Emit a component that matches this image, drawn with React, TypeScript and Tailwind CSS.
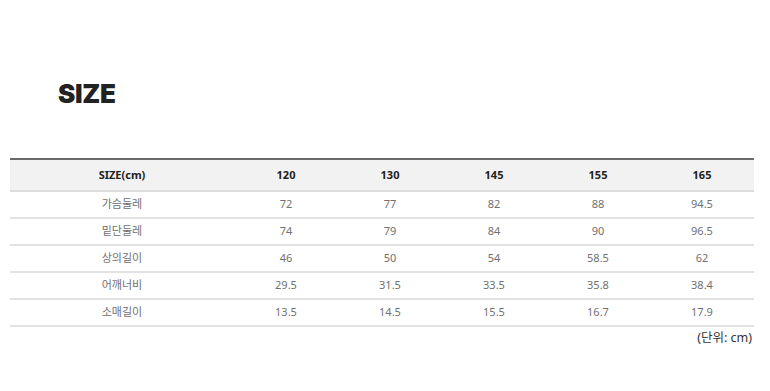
import React from "react";

const rows: [string, string[]][] = [
  ["가슴둘레", ["72", "77", "82", "88", "94.5"]],
  ["밑단둘레", ["74", "79", "84", "90", "96.5"]],
  ["상의길이", ["46", "50", "54", "58.5", "62"]],
  ["어깨너비", ["29.5", "31.5", "33.5", "35.8", "38.4"]],
  ["소매길이", ["13.5", "14.5", "15.5", "16.7", "17.9"]],
];

const font = { fontFamily: '"Noto Sans", "Noto Sans CJK KR", sans-serif' };

export default function App() {
  return (
    <div className="w-[770px] h-[391px] bg-white" style={font}>
      <div className="pt-[79px] pl-[58px] h-[158px]">
        <h1 className="text-[26px] leading-[30px] font-black tracking-[-0.3px] text-[#222]" style={{ fontFamily: 'Inter, sans-serif' }}>
          SIZE
        </h1>
      </div>
      <div className="mx-[10px] w-[744px]">
        <div className="grid grid-cols-[224px_104px_104px_104px_104px_104px] h-[34px] border-t-2 border-[#6b6b6b] bg-[#f3f2f2] border-b-2 border-b-[#dcdcdc] items-center text-[11px] font-bold text-[#222]">
          <div className="text-center">SIZE(cm)</div>
          <div className="text-center">120</div>
          <div className="text-center">130</div>
          <div className="text-center">145</div>
          <div className="text-center">155</div>
          <div className="text-center">165</div>
        </div>
        {rows.map(([label, vals]) => (
          <div
            key={label}
            className="grid grid-cols-[224px_104px_104px_104px_104px_104px] h-[27px] border-b-2 border-[#e2e2e2] items-center text-[11px] text-[#707070]"
          >
            <div className="text-center">{label}</div>
            {vals.map((v, i) => (
              <div key={i} className="text-center">{v}</div>
            ))}
          </div>
        ))}
        <div className="text-right pr-[2px] pt-[2px] text-[12.5px] text-[#333]">(단위: cm)</div>
      </div>
    </div>
  );
}
